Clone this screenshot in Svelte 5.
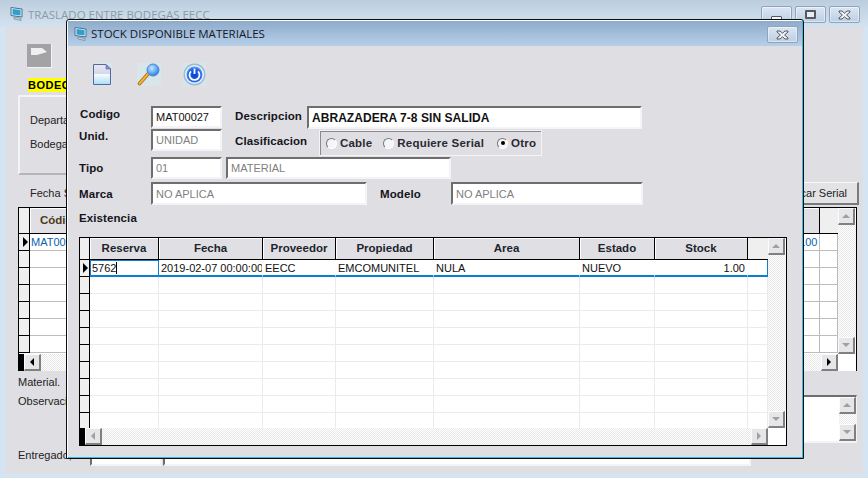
<script lang="ts">
  // Traslado window with the stock picker dialog open on top of it.
  const cols = [
    { label: 'Reserva', value: '5762' },
    { label: 'Fecha', value: '2019-02-07 00:00:00' },
    { label: 'Proveedor', value: 'EECC' },
    { label: 'Propiedad', value: 'EMCOMUNITEL' },
    { label: 'Area', value: 'NULA' },
    { label: 'Estado', value: 'NUEVO' },
    { label: 'Stock', value: '1.00' },
    { label: '', value: '' },
  ];
  const emptyRows = Array.from({ length: 9 });
  const backRows = Array.from({ length: 6 });
</script>

{#snippet appIcon()}
  <svg class="app-icon" width="16" height="16" viewBox="0 0 16 16">
    <path d="M2 1.5 L13 3 V11 L2 9.5 Z" fill="#dff3fb" stroke="#4a6f8c" />
    <path d="M3.5 3 L11.5 4 V9.5 L3.5 8.5 Z" fill="#2f9fd0" />
    <path d="M5 11 L12 12.5 V14.5 L5 13 Z" fill="#c9d6de" stroke="#6b8496" stroke-width=".7" />
  </svg>
{/snippet}

{#snippet closeGlyph()}
  <svg width="13" height="10" viewBox="0 0 13 10">
    <path d="M1 1 H4 L6.5 3.2 L9 1 H12 V2 L8.6 5 L12 8 V9 H9 L6.5 6.8 L4 9 H1 V8 L4.4 5 L1 2 Z" fill="#eef1f5" stroke="#55585f" />
  </svg>
{/snippet}

{#snippet sbtn(dir, off)}
  <div class="sbtn">
    <span class="arrow {dir}" class:off></span>
  </div>
{/snippet}

<div class="desk">
  <section class="main">
    <header class="main-title">
      {@render appIcon()}
      <span class="main-caption">TRASLADO ENTRE BODEGAS EECC</span>
      <div class="win-btns">
        <div class="win-btn"><span class="min-glyph"></span></div>
        <div class="win-btn"><span class="max-glyph"></span></div>
        <div class="win-btn">{@render closeGlyph()}</div>
      </div>
    </header>

    <div class="client">
      <div class="flag">
        <svg width="16" height="13" viewBox="0 0 16 13"><path d="M0 0 H11 L16 4 L6 7 H0 Z M0 7 V13" fill="#efeff2" /></svg>
      </div>
      <div class="bodega-tag"><span>BODEC</span></div>

      <div class="groupbox">
        <div>Departa</div>
        <div>Bodega</div>
      </div>

      <div class="filter-row">
        <span>Fecha S</span>
        <div class="push-btn">Buscar Serial</div>
      </div>

      <div class="dgrid back">
        <div class="dgrid-main">
          <div class="drow dhead back-cols">
            <div class="ind"></div>
            <div class="hcell back-first">Código</div>
            <div class="hcell"></div>
            <div class="hcell tail"></div>
          </div>
          <div class="drow back-cols">
            <div class="ind"><span class="pointer"></span></div>
            <div class="dcell blue">MAT00027</div>
            <div class="dcell blue right">1.00</div>
            <div class="dcell"></div>
          </div>
          {#each backRows as _}
            <div class="drow back-cols">
              <div class="ind"></div>
              <div class="dcell"></div>
              <div class="dcell"></div>
              <div class="dcell"></div>
            </div>
          {/each}
        </div>
        <div class="vbar">
          {@render sbtn('up', true)}
          <div class="track"></div>
          {@render sbtn('down', true)}
        </div>
        <div class="hbar">
          <div class="hbar-cap"></div>
          {@render sbtn('left', false)}
          <div class="track"></div>
          {@render sbtn('right', false)}
        </div>
        <div class="corner"></div>
      </div>

      <div class="line-label material">Material.</div>
      <div class="obs-row">
        <span class="line-label">Observaci</span>
        <div class="obs-box">
          <div class="vbar">
            {@render sbtn('up', true)}
            <div class="track"></div>
            {@render sbtn('down', true)}
          </div>
        </div>
      </div>
      <div class="entregado">
        <span class="line-label">Entregado,</span>
        <div class="field ent-a"></div>
        <div class="field ent-b"></div>
      </div>
    </div>
  </section>

  <section class="modal">
    <header class="modal-title">
      {@render appIcon()}
      <span class="modal-caption">STOCK DISPONIBLE MATERIALES</span>
      <div class="win-btn modal-close">{@render closeGlyph()}</div>
    </header>

    <div class="toolbar">
      <div class="tool tool-doc">
        <svg width="20" height="23" viewBox="0 0 20 23">
          <defs>
            <linearGradient id="docfill" x1="0" y1="0" x2="0" y2="1">
              <stop offset="0" stop-color="#e8e9f4" />
              <stop offset=".45" stop-color="#d5d8ea" />
              <stop offset=".5" stop-color="#f5fbff" />
              <stop offset="1" stop-color="#a9dff2" />
            </linearGradient>
          </defs>
          <path d="M1.5 1.5 H14 L18.5 6 V21.5 H1.5 Z" fill="url(#docfill)" stroke="#5e639e" />
          <path d="M14 1.5 V6 H18.5 Z" fill="#8f94c4" stroke="#5e639e" stroke-width=".6" />
        </svg>
      </div>
      <div class="tool tool-mag">
        <svg width="24" height="23" viewBox="0 0 24 23">
          <defs>
            <radialGradient id="lens" cx=".4" cy=".35" r=".7">
              <stop offset="0" stop-color="#c6e6ff" />
              <stop offset=".6" stop-color="#5da8f6" />
              <stop offset="1" stop-color="#2f6fd8" />
            </radialGradient>
          </defs>
          <path d="M2.5 20.5 L11.5 10.5" stroke="#a86a12" stroke-width="3.6" stroke-linecap="round" />
          <path d="M2.5 20.5 L11.5 10.5" stroke="#f6b236" stroke-width="2" stroke-linecap="round" />
          <circle cx="16" cy="7" r="6" fill="url(#lens)" stroke="#4c86d4" />
        </svg>
      </div>
      <div class="tool tool-power">
        <svg width="23" height="23" viewBox="0 0 23 23">
          <defs>
            <radialGradient id="orb" cx=".5" cy=".55" r=".55">
              <stop offset="0" stop-color="#0d3fd0" />
              <stop offset=".7" stop-color="#1f63e6" />
              <stop offset="1" stop-color="#62a8f0" />
            </radialGradient>
          </defs>
          <circle cx="11.5" cy="11.5" r="11" fill="#9fb9d2" />
          <circle cx="11.5" cy="11.5" r="9.6" fill="#e4f0fa" />
          <circle cx="11.5" cy="11.5" r="8" fill="url(#orb)" />
          <path d="M8 8.4 A5 5 0 1 0 15 8.4" fill="none" stroke="#fff" stroke-width="1.8" />
          <path d="M11.5 5.5 V11" stroke="#fff" stroke-width="1.8" />
        </svg>
      </div>
    </div>

    <div class="form">
      <label class="lbl lbl-cod" for="f-cod">Codigo</label>
      <input id="f-cod" class="field" readonly value="MAT00027" />
      <span class="lbl lbl-low">Descripcion</span>
      <input class="field strong" readonly value="ABRAZADERA 7-8 SIN SALIDA" />

      <span class="lbl lbl-unid">Unid.</span>
      <input class="field off" readonly value="UNIDAD" />
      <span class="lbl lbl-clas">Clasificacion</span>
      <div class="radio-box">
        <span class="radio"><i></i>Cable</span>
        <span class="radio"><i></i>Requiere Serial</span>
        <span class="radio on"><i></i>Otro</span>
      </div>
    </div>

    <div class="form-line tipo">
      <span class="lbl">Tipo</span>
      <input class="field off w71" readonly value="01" />
      <input class="field off w225" readonly value="MATERIAL" />
    </div>
    <div class="form-line marca">
      <span class="lbl">Marca</span>
      <input class="field off w216" readonly value="NO APLICA" />
      <span class="lbl modelo">Modelo</span>
      <input class="field off w192" readonly value="NO APLICA" />
    </div>
    <div class="lbl existencia">Existencia</div>

    <div class="dgrid front">
      <div class="dgrid-main">
        <div class="drow dhead front-cols">
          <div class="ind"></div>
          {#each cols as c}
            <div class="hcell" class:tail={!c.label}>{c.label}</div>
          {/each}
        </div>
        <div class="drow front-cols selected">
          <div class="ind"><span class="pointer"></span></div>
          {#each cols as c, i}
            <div class="dcell" class:active={i === 0} class:right={c.label === 'Stock'}>
              {c.value}{#if i === 0}<span class="caret"></span>{/if}
            </div>
          {/each}
        </div>
        {#each emptyRows as _}
          <div class="drow front-cols">
            <div class="ind"></div>
            {#each cols as c}
              <div class="dcell"></div>
            {/each}
          </div>
        {/each}
      </div>
      <div class="vbar">
        {@render sbtn('up', true)}
        <div class="track"></div>
        {@render sbtn('down', true)}
      </div>
      <div class="hbar">
        <div class="hbar-cap"></div>
        {@render sbtn('left', true)}
        <div class="track"></div>
        {@render sbtn('right', true)}
      </div>
      <div class="corner"></div>
    </div>
  </section>
</div>

<style>
  :global(body) {
    margin: 0;
    background: #d5e4f2;
  }
  * {
    box-sizing: border-box;
  }
  .desk {
    position: relative;
    width: 868px;
    height: 478px;
    overflow: hidden;
    font-family: "Liberation Sans", Arial, sans-serif;
    font-size: 11px;
    color: #111;
    background: #d5e4f2;
  }

  /* back window */
  .main {
    height: 100%;
    display: flex;
    flex-direction: column;
    padding: 0 5px 4px 6px;
  }
  .main-title {
    height: 27px;
    margin: 0 -5px 0 -6px;
    padding: 6px 8px 0 9px;
    display: flex;
    align-items: flex-start;
    background: linear-gradient(#bccede, #d3e2f0);
  }
  .app-icon {
    flex: none;
  }
  .main-caption {
    margin-left: 3px;
    font-family: "Open Sans", sans-serif;
    font-size: 11.5px;
    line-height: 18px;
    color: #8d9aa6;
    white-space: nowrap;
  }
  .win-btns {
    margin-left: auto;
    display: flex;
    gap: 3px;
  }
  .win-btn {
    width: 31px;
    height: 17px;
    display: flex;
    align-items: center;
    justify-content: center;
    border: 1px solid #8fa3ba;
    border-radius: 2px;
    background: linear-gradient(#dbe6f2, #bccfe4);
    box-shadow: inset 0 0 0 1px rgba(255, 255, 255, 0.45);
  }
  .min-glyph {
    width: 11px;
    height: 6px;
    margin-top: 8px;
    background: #f1f3f6;
    border: 1px solid #55585f;
    border-radius: 1px;
  }
  .max-glyph {
    width: 11px;
    height: 9px;
    border: 2px solid #55585f;
    border-radius: 1px;
    position: relative;
    background: #e6edf5;
  }
  .client {
    flex: 1;
    background: #dfdee3;
    padding-left: 12px;
    padding-right: 6px;
    color: #222;
    font-size: 11px;
    min-height: 0;
  }
  .flag {
    width: 25px;
    height: 24px;
    margin: 17px 0 0 9px;
    padding: 4px 0 0 4px;
    background: #a3a3a6;
    border-right: 1px solid #f4f4f6;
    border-bottom: 1px solid #f4f4f6;
  }
  .bodega-tag {
    margin: 10px 0 0 10px;
    height: 14px;
    line-height: 14px;
    font-weight: 700;
    font-size: 11px;
    letter-spacing: 0.5px;
    color: #000;
  }
  .bodega-tag span {
    background: #ffff00;
    display: inline-block;
  }
  .groupbox {
    width: 700px;
    height: 80px;
    margin-top: 3px;
    padding: 16px 10px 0;
    border: 2px solid #f4f4f6;
    border-right-color: #b5b5b8;
    border-bottom-color: #b5b5b8;
    line-height: 14px;
  }
  .groupbox div + div {
    margin-top: 10px;
  }
  .filter-row {
    height: 32px;
    padding: 4px 0 0 12px;
    display: flex;
    align-items: center;
    justify-content: space-between;
  }
  .push-btn {
    width: 100px;
    height: 23px;
    line-height: 20px;
    text-align: right;
    padding-right: 10px;
    margin-right: -2px;
    font-size: 11px;
    background: #e3e3e6;
    border: 1px solid #f8f8f8;
    border-right: 2px solid #7a7a7a;
    border-bottom: 2px solid #7a7a7a;
  }

  /* data grids */
  .dgrid {
    display: grid;
    grid-template-columns: minmax(0, 1fr) 18px;
    background: #fff;
    border: 1px solid #000;
  }
  .dgrid.back {
    width: 839px;
    height: 164px;
    grid-template-rows: 146px 17px;
  }
  .dgrid.front {
    width: 708px;
    height: 209px;
    margin-left: 11px;
    grid-template-rows: 190px 17px;
  }
  .dgrid-main {
    overflow: hidden;
    min-width: 0;
  }
  .drow {
    display: grid;
    height: 17px;
  }
  .back-cols {
    grid-template-columns: 11px 100px minmax(0, 1fr) 18px;
  }
  .front-cols {
    grid-template-columns: 10px 69px 104px 73px 98px 146px 75px 93px 20px;
  }
  .dhead {
    height: 22px;
  }
  .back .dhead {
    height: 26px;
  }
  .ind {
    background: #efeff0;
    border-right: 1px solid #000;
    border-bottom: 1px solid #000;
    display: flex;
    align-items: center;
    justify-content: flex-end;
    padding-right: 1px;
  }
  .pointer {
    width: 0;
    height: 0;
    border-left: 5px solid #000;
    border-top: 5px solid transparent;
    border-bottom: 5px solid transparent;
  }
  .hcell {
    background: #e0e0e4;
    border-right: 1px solid #000;
    border-bottom: 1px solid #000;
    box-shadow: inset 1px 1px 0 #fff;
    text-align: center;
    font-weight: 700;
    font-size: 11.5px;
    line-height: 20px;
    color: #20242c;
    white-space: nowrap;
    overflow: hidden;
  }
  .hcell.tail {
    background: #efeff0;
    border-right: 0;
    box-shadow: none;
  }
  .back .hcell {
    line-height: 24px;
    color: #4a3a20;
  }
  .back-first {
    text-align: left;
    padding-left: 10px;
  }
  .dcell {
    border-right: 1px solid #ebebeb;
    border-bottom: 1px solid #ebebeb;
    padding: 0 2px;
    line-height: 16px;
    font-size: 11px;
    color: #111;
    white-space: nowrap;
    overflow: hidden;
    position: relative;
  }
  .back .dcell {
    border-color: #bcbcbc;
  }
  .dcell.blue {
    color: #0b5fb0;
    padding: 0 1px;
  }
  .dcell.right {
    text-align: right;
  }
  .back .dcell.right {
    padding-right: 2px;
    letter-spacing: -0.3px;
  }
  .selected .dcell {
    border-bottom: 2px solid #0b7fd4;
    border-right-color: transparent;
    line-height: 16px;
  }
  .selected .dcell:last-child {
    border-right: 1px solid #0b7fd4;
  }
  .selected .dcell.active {
    border: 1px solid #0b7fd4;
    border-bottom-width: 2px;
    padding: 0 1px;
    line-height: 14px;
    background: #fff;
  }
  .caret {
    display: inline-block;
    width: 1px;
    height: 12px;
    background: #000;
    vertical-align: -2px;
  }
  .vbar {
    display: flex;
    flex-direction: column;
  }
  .hbar {
    display: flex;
  }
  .hbar-cap {
    width: 5px;
    background: #000;
    flex: none;
  }
  .track {
    flex: 1;
    background: repeating-conic-gradient(#e8e8e8 0 25%, #fff 0 50%) 0 0 / 2px 2px;
  }
  .corner {
    background: #fff;
  }
  .sbtn {
    width: 17px;
    height: 17px;
    flex: none;
    display: flex;
    align-items: center;
    justify-content: center;
    background: #e6e6e8;
    border-top: 1px solid #fbfbfb;
    border-left: 1px solid #fbfbfb;
    border-right: 2px solid #808080;
    border-bottom: 2px solid #808080;
  }
  .arrow {
    width: 0;
    height: 0;
    border: 4px solid transparent;
  }
  .arrow.up {
    border-top: 0;
    border-bottom: 4px solid #000;
  }
  .arrow.down {
    border-bottom: 0;
    border-top: 4px solid #000;
  }
  .arrow.left {
    border-left: 0;
    border-right: 4px solid #000;
  }
  .arrow.right {
    border-right: 0;
    border-left: 4px solid #000;
  }
  .arrow.up.off {
    border-bottom-color: #a0a0a0;
  }
  .arrow.down.off {
    border-top-color: #a0a0a0;
  }
  .arrow.left.off {
    border-right-color: #a0a0a0;
  }
  .arrow.right.off {
    border-left-color: #a0a0a0;
  }

  .line-label {
    font-size: 11px;
    line-height: 14px;
    white-space: nowrap;
  }
  .material {
    margin-top: 4px;
  }
  .obs-row {
    display: flex;
    height: 48px;
    margin-top: 6px;
    width: 839px;
  }
  .obs-row .line-label {
    margin-top: -1px;
  }
  .obs-box {
    flex: 1;
    margin-left: 24px;
    background: #fff;
    border-top: 2px solid #6e6e6e;
    border-left: 2px solid #6e6e6e;
    border-right: 1px solid #f4f4f6;
    border-bottom: 2px solid #f4f4f6;
    display: flex;
    justify-content: flex-end;
  }
  .entregado {
    display: flex;
    align-items: flex-end;
    height: 23px;
  }
  .entregado .line-label {
    width: 72px;
    margin-bottom: 4px;
  }
  .entregado .ent-a {
    width: 72px;
    height: 22px;
  }
  .entregado .ent-b {
    width: 588px;
    height: 22px;
    margin-left: 1px;
  }

  /* dialog */
  .modal {
    position: absolute;
    left: 66px;
    top: 19px;
    width: 738px;
    height: 440px;
    background: #dfdee3;
    border: 1px solid #0c0c0c;
    border-top-right-radius: 3px;
    border-top-left-radius: 3px;
    box-shadow: inset 1px 1px 0 #fff, inset -1px -1px 0 #2fbde6;
    padding: 1px;
  }
  .modal-title {
    height: 25px;
    padding: 5px 4px 0 5px;
    display: flex;
    align-items: flex-start;
    background: linear-gradient(#8fabcb, #b6d0e9);
  }
  .modal-caption {
    margin-left: 2px;
    margin-top: -1px;
    font-family: "Open Sans", sans-serif;
    font-size: 11.5px;
    line-height: 17px;
    color: #15192a;
    white-space: nowrap;
  }
  .modal-close {
    margin-left: auto;
  }
  .toolbar {
    height: 60px;
    display: flex;
    align-items: flex-start;
    padding: 17px 0 0 24px;
  }
  .tool {
    height: 23px;
    display: flex;
    background: #d6e6ea;
  }
  .tool-mag {
    margin-left: 25px;
  }
  .tool-power {
    margin-left: 22px;
  }

  .form {
    display: grid;
    grid-template-columns: 71px 71px 85px 1fr;
    grid-template-rows: 23px 28px;
    padding-left: 12px;
    padding-right: 160px;
    height: 51px;
  }
  .lbl {
    font-weight: 700;
    font-size: 11.5px;
    letter-spacing: 0.1px;
    color: #15151a;
    white-space: nowrap;
    line-height: 14px;
  }
  .lbl-cod {
    padding-top: 1px;
  }
  .lbl-low {
    padding: 3px 0 0 13px;
  }
  .lbl-clas {
    padding: 5px 0 0 13px;
  }
  .lbl-unid {
    margin-left: -1px;
  }
  .field {
    display: block;
    height: 22px;
    width: 100%;
    min-width: 0;
    margin: 0;
    padding: 0 3px;
    outline: none;
    background: #fff;
    border-style: solid;
    border-width: 2px;
    border-color: #6e6e6e #f4f4f6 #f4f4f6 #6e6e6e;
    font: 11px "Liberation Sans", Arial, sans-serif;
    letter-spacing: 0;
    color: #111;
  }
  .field.off {
    color: #7f7f7f;
  }
  .field.strong {
    font-weight: 700;
    font-size: 12px;
    letter-spacing: 0.05px;
    height: 23px;
  }
  .radio-box {
    margin-left: 12px;
    width: 223px;
    height: 26px;
    margin-top: 1px;
    display: flex;
    align-items: center;
    gap: 11px;
    padding-left: 6px;
    font-weight: 700;
    font-size: 11.5px;
    letter-spacing: 0.2px;
    color: #2a2a32;
    border: 1px solid #f4f4f6;
    box-shadow: inset 1px 1px 0 #8a8a8e;
  }
  .radio {
    display: flex;
    align-items: center;
    gap: 3px;
    white-space: nowrap;
  }
  .radio.on {
    margin-left: 2px;
  }
  .radio i {
    width: 11px;
    height: 11px;
    border-radius: 50%;
    background: #f6f6f8;
    border: 1px solid #77777b;
    border-right-color: #fff;
    border-bottom-color: #fff;
    position: relative;
    display: block;
  }
  .radio.on i::after {
    content: "";
    position: absolute;
    left: 2.5px;
    top: 2.5px;
    width: 4px;
    height: 4px;
    border-radius: 50%;
    background: #000;
  }
  .form-line {
    display: flex;
    align-items: center;
    padding-left: 11px;
  }
  .form-line > .lbl:first-child {
    width: 72px;
  }
  .tipo {
    height: 22px;
  }
  .marca {
    height: 23px;
    margin-top: 3px;
  }
  .w71 {
    width: 71px;
  }
  .w225 {
    width: 225px;
    margin-left: 4px;
  }
  .w216 {
    width: 216px;
    height: 23px;
  }
  .modelo {
    width: 84px;
    padding-left: 13px;
  }
  .w192 {
    width: 192px;
    height: 23px;
  }
  .existencia {
    margin: 6px 0 0 11px;
    height: 26px;
  }
</style>
